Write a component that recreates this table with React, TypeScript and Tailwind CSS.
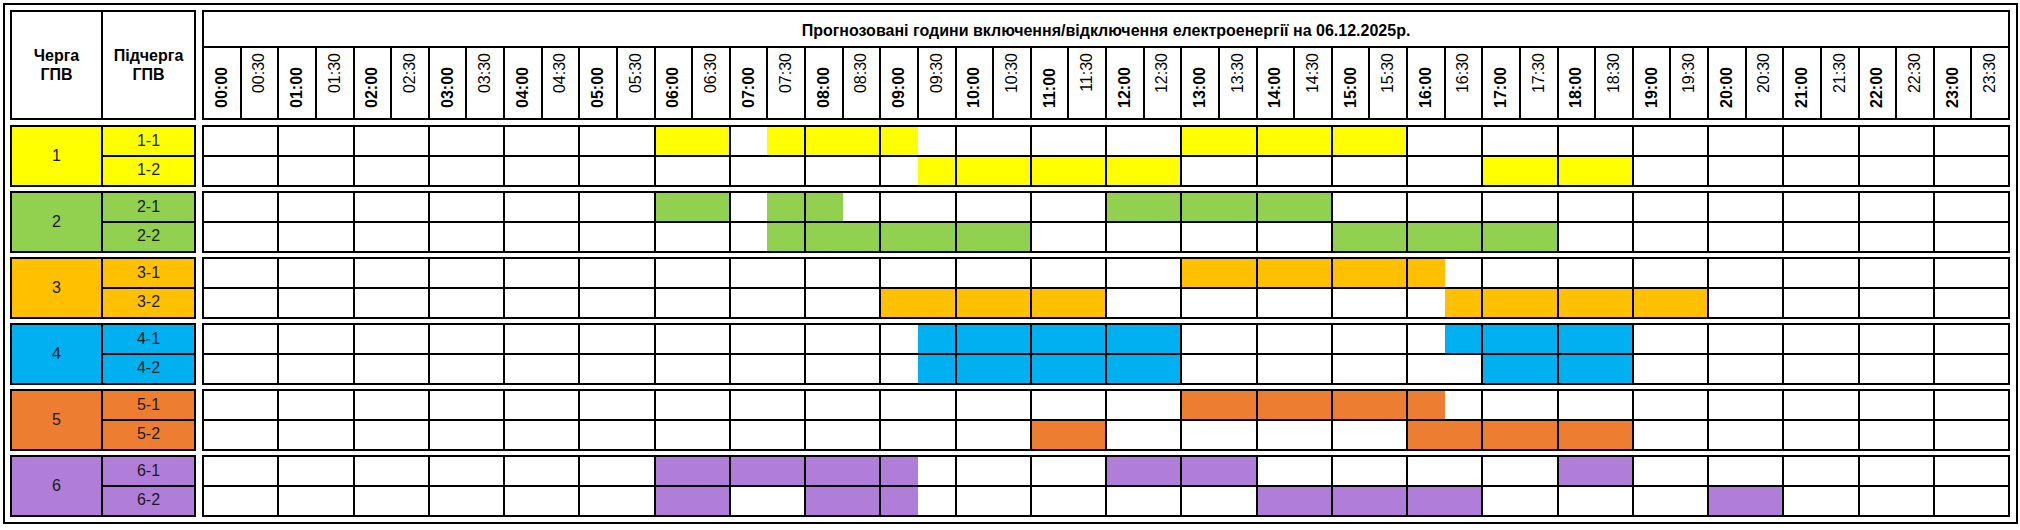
import React from "react";

// Half-hour slot ranges (inclusive) with power off, per subqueue.
type Range = [number, number];

type Group = {
  id: number;
  color: string;
  rows: { label: string; off: Range[] }[];
};

const GROUPS: Group[] = [
  {
    id: 1,
    color: "bg-[#ffff00]",
    rows: [
      { label: "1-1", off: [[12, 13], [15, 18], [26, 31]] },
      { label: "1-2", off: [[19, 25], [34, 37]] },
    ],
  },
  {
    id: 2,
    color: "bg-[#92d050]",
    rows: [
      { label: "2-1", off: [[12, 13], [15, 16], [24, 29]] },
      { label: "2-2", off: [[15, 21], [30, 35]] },
    ],
  },
  {
    id: 3,
    color: "bg-[#ffc000]",
    rows: [
      { label: "3-1", off: [[26, 32]] },
      { label: "3-2", off: [[18, 23], [33, 39]] },
    ],
  },
  {
    id: 4,
    color: "bg-[#00b0f0]",
    rows: [
      { label: "4-1", off: [[19, 25], [33, 37]] },
      { label: "4-2", off: [[19, 25], [34, 37]] },
    ],
  },
  {
    id: 5,
    color: "bg-[#ed7d31]",
    rows: [
      { label: "5-1", off: [[26, 32]] },
      { label: "5-2", off: [[22, 23], [32, 37]] },
    ],
  },
  {
    id: 6,
    color: "bg-[#b07ed8]",
    rows: [
      { label: "6-1", off: [[12, 18], [24, 27], [36, 37]] },
      { label: "6-2", off: [[12, 13], [16, 18], [28, 33], [40, 41]] },
    ],
  },
];

const HOURS = Array.from({ length: 24 }, (_, h) => h);
const pad = (n: number) => String(n).padStart(2, "0");

const isOff = (slot: number, off: Range[]) =>
  off.some(([a, b]) => slot >= a && slot <= b);

function TimelineRow({ off, color }: { off: Range[]; color: string }) {
  return (
    <div className="grid h-[28px] grid-cols-24 gap-x-[2px] bg-black">
      {HOURS.map((h) => (
        <div key={h} className="flex bg-white">
          <div className={`flex-1 ${isOff(h * 2, off) ? color : ""}`} />
          <div className={`flex-1 ${isOff(h * 2 + 1, off) ? color : ""}`} />
        </div>
      ))}
    </div>
  );
}

function Header() {
  return (
    <div className="flex gap-[6px]">
      <div className="flex h-[110px] w-[186px] border-2 border-black text-[16px] font-bold leading-[19px] text-black">
        <div className="flex w-[91px] items-center justify-center border-r-2 border-black text-center">
          Черга
          <br />
          ГПВ
        </div>
        <div className="flex flex-1 items-center justify-center text-center">
          Підчерга
          <br />
          ГПВ
        </div>
      </div>
      <div className="flex h-[110px] w-[1808px] flex-col border-2 border-black">
        <div className="flex h-[36px] items-center justify-center border-b-2 border-black pt-[3px] text-[16px] font-bold text-black">
          Прогнозовані години включення/відключення електроенергії на 06.12.2025р.
        </div>
        <div className="grid flex-1 grid-cols-48 gap-x-[2px] bg-black">
          {HOURS.flatMap((h) => [
            <div
              key={`${h}a`}
              className="flex items-end justify-center bg-white pb-[10px]"
            >
              <span className="rotate-180 text-[16px] leading-none font-bold text-black [writing-mode:vertical-rl]">
                {pad(h)}:00
              </span>
            </div>,
            <div
              key={`${h}b`}
              className="flex items-start justify-center bg-white pt-[5px]"
            >
              <span className="rotate-180 text-[16px] leading-none text-black [writing-mode:vertical-rl]">
                {pad(h)}:30
              </span>
            </div>,
          ])}
        </div>
      </div>
    </div>
  );
}

function GroupBlock({ group }: { group: Group }) {
  return (
    <div className="flex gap-[6px]">
      <div
        className={`flex h-[62px] w-[186px] border-2 border-black text-[16px] text-[#1a1a1a] ${group.color}`}
      >
        <div className="flex w-[91px] items-center justify-center border-r-2 border-black">
          {group.id}
        </div>
        <div className="flex flex-1 flex-col">
          {group.rows.map((r, i) => (
            <div
              key={r.label}
              className={`flex h-[28px] items-center justify-center ${
                i > 0 ? "border-t-2 border-black" : ""
              }`}
            >
              {r.label}
            </div>
          ))}
        </div>
      </div>
      <div className="flex h-[62px] w-[1808px] flex-col border-2 border-black">
        {group.rows.map((r, i) => (
          <div key={r.label} className={i > 0 ? "border-t-2 border-black" : ""}>
            <TimelineRow off={r.off} color={group.color} />
          </div>
        ))}
      </div>
    </div>
  );
}

export default function App() {
  return (
    <div className="h-[530px] w-[2020px] bg-white p-[3px] font-['Liberation_Sans',Arial,sans-serif]">
      <div className="h-[521px] w-[2015px] border-2 border-black pt-[5px] pl-[5px]">
        <Header />
        <div className="mt-[5px] flex flex-col gap-[4px]">
          {GROUPS.map((g) => (
            <GroupBlock key={g.id} group={g} />
          ))}
        </div>
      </div>
    </div>
  );
}
